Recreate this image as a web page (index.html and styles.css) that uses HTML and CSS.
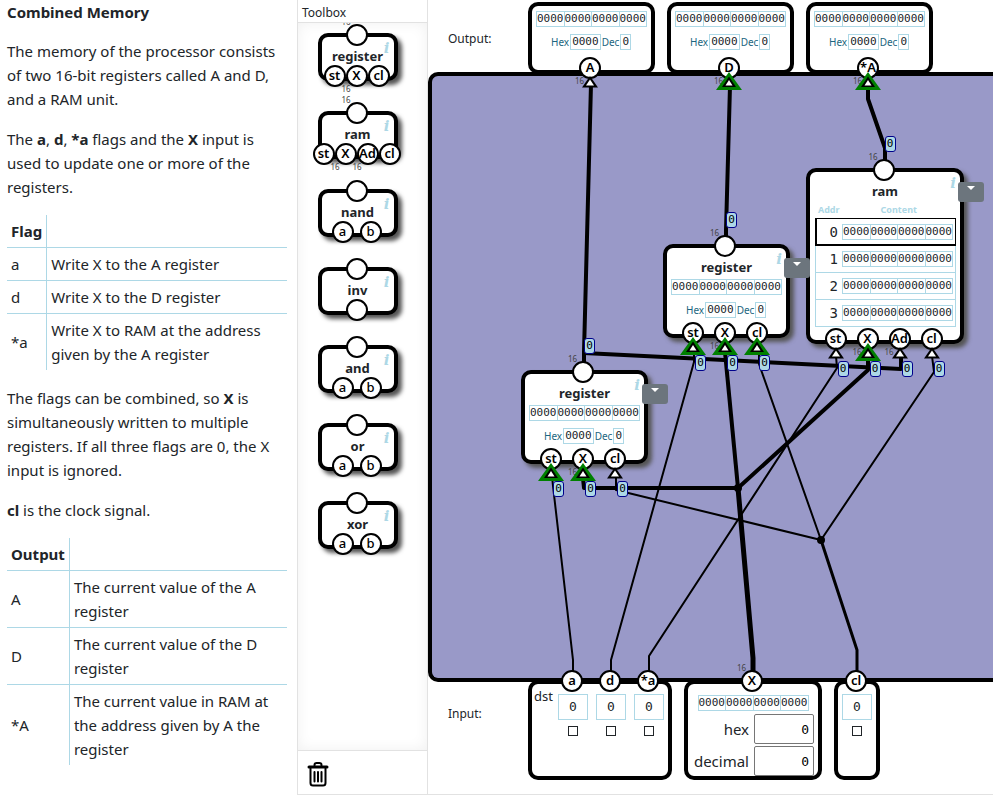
FILE: index.html
```html
<!DOCTYPE html>
<html lang="en">
<head>
<meta charset="utf-8">
<title>Combined Memory</title>
<link rel="stylesheet" href="styles.css">
</head>
<body>
<div class="app">
  <article class="guide">
    <h1>Combined Memory</h1>
    <p>The memory of the processor consists of two 16-bit registers called A and D, and a RAM unit.</p>
    <p>The <b>a</b>, <b>d</b>, <b>*a</b> flags and the <b>X</b> input is used to update one or more of the registers.</p>
    <table class="spec">
      <tr><th>Flag</th><th></th></tr>
      <tr><td>a</td><td>Write X to the A register</td></tr>
      <tr><td>d</td><td>Write X to the D register</td></tr>
      <tr><td>*a</td><td>Write X to RAM at the address given by the A register</td></tr>
    </table>
    <p>The flags can be combined, so <b>X</b> is simultaneously written to multiple registers. If all three flags are 0, the X input is ignored.</p>
    <p><b>cl</b> is the clock signal.</p>
    <table class="spec">
      <tr><th>Output</th><th></th></tr>
      <tr><td>A</td><td>The current value of the A register</td></tr>
      <tr><td>D</td><td>The current value of the D register</td></tr>
      <tr><td>*A</td><td>The current value in RAM at the address given by A the register</td></tr>
    </table>
  </article>

  <aside class="toolbox">
    <h2>Toolbox</h2>
    <div class="tools">
      <div class="node tool"><div class="pins top"><span class="pin"><small>16</small></span></div><h3>register</h3><i class="info">i</i><div class="pins bottom"><span class="pin">st</span><span class="pin">X<small>16</small></span><span class="pin">cl</span></div></div>
      <div class="node tool"><div class="pins top"><span class="pin"><small>16</small></span></div><h3>ram</h3><i class="info">i</i><div class="pins bottom"><span class="pin">st</span><span class="pin">X<small>16</small></span><span class="pin">Ad<small>16</small></span><span class="pin">cl</span></div></div>
      <div class="node tool"><div class="pins top"><span class="pin"></span></div><h3>nand</h3><i class="info">i</i><div class="pins bottom pair"><span class="pin">a</span><span class="pin">b</span></div></div>
      <div class="node tool"><div class="pins top"><span class="pin"></span></div><h3>inv</h3><i class="info">i</i><div class="pins bottom"><span class="pin"></span></div></div>
      <div class="node tool"><div class="pins top"><span class="pin"></span></div><h3>and</h3><i class="info">i</i><div class="pins bottom pair"><span class="pin">a</span><span class="pin">b</span></div></div>
      <div class="node tool"><div class="pins top"><span class="pin"></span></div><h3>or</h3><i class="info">i</i><div class="pins bottom pair"><span class="pin">a</span><span class="pin">b</span></div></div>
      <div class="node tool"><div class="pins top"><span class="pin"></span></div><h3>xor</h3><i class="info">i</i><div class="pins bottom pair"><span class="pin">a</span><span class="pin">b</span></div></div>
    </div>
    <div class="bin">
      <svg width="22" height="26" viewBox="0 0 22 26" fill="none" stroke="#000" stroke-linecap="round" stroke-linejoin="round" role="img" aria-label="Trash">
        <path d="M7.500 4.500V4Q7.500 2 9.500 2H12.500Q14.500 2 14.500 4V4.500" stroke-width="2"/>
        <path d="M2 6H20" stroke-width="3"/>
        <path d="M3.500 7.500V22Q3.500 24.500 6 24.500H16Q18.500 24.500 18.500 22V7.500" stroke-width="2"/>
        <path d="M7.500 11V20.500M11 11V20.500M14.500 11V20.500" stroke-width="2"/>
      </svg>
    </div>
  </aside>

  <main class="workspace">
    <svg class="defs" width="0" height="0" aria-hidden="true">
      <symbol id="arrow" viewBox="0 0 28 20"><path d="M14 4L22 15.500H6Z"/><path d="M14 7.500L18 13.500H10Z" fill="#fff"/></symbol>
      <symbol id="arrow-on" viewBox="0 0 28 20"><path d="M14 0L27 18H1Z" fill="#008000"/><path d="M14 4.500L21 15H7Z"/><path d="M14 8L17.500 13.500H10.500Z" fill="#fff"/></symbol>
    </svg>

    <section class="outputs">
      <span class="side-label">Output:</span>
      <div class="port-box">
        <div class="bits"><span>0000</span><span>0000</span><span>0000</span><span>0000</span></div>
        <div class="numbers">Hex<output>0000</output>Dec<output>0</output></div>
        <div class="pins bottom"><span class="pin">A<small>16</small><svg><use href="#arrow"/></svg></span></div>
      </div>
      <div class="port-box">
        <div class="bits"><span>0000</span><span>0000</span><span>0000</span><span>0000</span></div>
        <div class="numbers">Hex<output>0000</output>Dec<output>0</output></div>
        <div class="pins bottom"><span class="pin">D<small>16</small><svg><use href="#arrow-on"/></svg></span></div>
      </div>
      <div class="port-box">
        <div class="bits"><span>0000</span><span>0000</span><span>0000</span><span>0000</span></div>
        <div class="numbers">Hex<output>0000</output>Dec<output>0</output></div>
        <div class="pins bottom"><span class="pin">*A<small>16</small><svg><use href="#arrow-on"/></svg></span></div>
      </div>
    </section>

    <section class="chip">
      <svg class="wires" aria-hidden="true">
        <g transform="translate(-432 -76)" fill="none" stroke="#000" stroke-linejoin="round">
          <g stroke-width="4">
            <path d="M591 84L584 352V364"/>
            <path d="M584 353L901 369V356"/>
            <path d="M730 86L726 230V238"/>
            <path d="M868 86V99L885 148V162"/>
            <path d="M583 478L584 488H738L868 370V356"/>
            <path d="M725 352L738 488"/>
          </g>
          <path d="M738 488L753 658V674" stroke-width="5"/>
          <path d="M821 540L857 650V674" stroke-width="3"/>
          <g stroke-width="2">
            <path d="M552 476L553 486L573 660V674"/>
            <path d="M694 354V362L611 660V674"/>
            <path d="M836 356L837 368L649 656V674"/>
            <path d="M616 478V490L821 540L759 364V352"/>
            <path d="M932 356L934 372L821 540"/>
          </g>
          <g fill="#000" stroke="none"><circle cx="738" cy="488" r="4"/><circle cx="821" cy="540" r="4"/></g>
        </g>
      </svg>

      <div class="node placed reg-a">
        <div class="pins top"><span class="pin"><small>16</small><em>0</em></span></div>
        <h3>register</h3><i class="info">i</i>
        <div class="bits"><span>0000</span><span>0000</span><span>0000</span><span>0000</span></div>
        <div class="numbers">Hex<output>0000</output>Dec<output>0</output></div>
        <button class="menu" aria-label="Register menu"></button>
        <div class="pins bottom"><span class="pin">st<svg><use href="#arrow-on"/></svg><em>0</em></span><span class="pin">X<small>16</small><svg><use href="#arrow-on"/></svg><em>0</em></span><span class="pin">cl<svg><use href="#arrow"/></svg><em>0</em></span></div>
      </div>

      <div class="node placed reg-d">
        <div class="pins top"><span class="pin"><small>16</small><em>0</em></span></div>
        <h3>register</h3><i class="info">i</i>
        <div class="bits"><span>0000</span><span>0000</span><span>0000</span><span>0000</span></div>
        <div class="numbers">Hex<output>0000</output>Dec<output>0</output></div>
        <button class="menu" aria-label="Register menu"></button>
        <div class="pins bottom"><span class="pin">st<svg><use href="#arrow-on"/></svg><em>0</em></span><span class="pin">X<small>16</small><svg><use href="#arrow-on"/></svg><em>0</em></span><span class="pin">cl<svg><use href="#arrow-on"/></svg><em>0</em></span></div>
      </div>

      <div class="node placed ram">
        <div class="pins top"><span class="pin"><small>16</small><em>0</em></span></div>
        <h3>ram</h3><i class="info">i</i>
        <table class="cells">
          <thead><tr><th>Addr</th><th>Content</th></tr></thead>
          <tbody>
            <tr class="current"><td>0</td><td><div class="bits"><span>0000</span><span>0000</span><span>0000</span><span>0000</span></div></td></tr>
            <tr><td>1</td><td><div class="bits"><span>0000</span><span>0000</span><span>0000</span><span>0000</span></div></td></tr>
            <tr><td>2</td><td><div class="bits"><span>0000</span><span>0000</span><span>0000</span><span>0000</span></div></td></tr>
            <tr><td>3</td><td><div class="bits"><span>0000</span><span>0000</span><span>0000</span><span>0000</span></div></td></tr>
          </tbody>
        </table>
        <button class="menu" aria-label="RAM menu"></button>
        <div class="pins bottom"><span class="pin">st<svg><use href="#arrow"/></svg><em>0</em></span><span class="pin">X<small>16</small><svg><use href="#arrow-on"/></svg><em>0</em></span><span class="pin">Ad<small>16</small><svg><use href="#arrow"/></svg><em>0</em></span><span class="pin">cl<svg><use href="#arrow"/></svg><em>0</em></span></div>
      </div>
    </section>

    <section class="inputs">
      <span class="side-label">Input:</span>
      <div class="port-box flags">
        <span class="group">dst</span>
        <div class="flag"><label class="pin" for="in-a">a</label><output>0</output><input type="checkbox" id="in-a"></div>
        <div class="flag"><label class="pin" for="in-d">d</label><output>0</output><input type="checkbox" id="in-d"></div>
        <div class="flag"><label class="pin" for="in-ma">*a</label><output>0</output><input type="checkbox" id="in-ma"></div>
      </div>
      <div class="port-box word">
        <div class="pins top"><span class="pin">X<small>16</small></span></div>
        <div class="bits"><span>0000</span><span>0000</span><span>0000</span><span>0000</span></div>
        <div class="fields">
          <label for="in-hex">hex</label><input id="in-hex" type="text" value="0">
          <label for="in-dec">decimal</label><input id="in-dec" type="text" value="0">
        </div>
      </div>
      <div class="port-box flags">
        <div class="flag"><label class="pin" for="in-cl">cl</label><output>0</output><input type="checkbox" id="in-cl"></div>
      </div>
    </section>
  </main>
</div>
</body>
</html>
```
FILE: styles.css
```css
* { box-sizing: border-box; }

body {
  margin: 0;
  background: #fff;
  color: #212529;
  font: 15px/24px "Noto Sans", "Open Sans", sans-serif;
}

.app {
  display: grid;
  grid-template-columns: 297px 131px minmax(0, 1fr);
  height: calc(100vh - 5px);
  overflow: hidden;
}

/* Guide */
.guide { padding: 0 10px 0 7px; }
.guide h1 { margin: 0 0 15px; font-size: 15px; line-height: 24px; }
.guide p { margin: 0 0 16px; }
.spec { width: 100%; margin-bottom: 16px; border-collapse: collapse; }
.spec th, .spec td { padding: 4px; text-align: left; }
.spec tr + tr { border-top: 1px solid #add8e6; }
.spec tr > :first-child { border-right: 1px solid #add8e6; }

/* Toolbox */
.toolbox {
  display: flex;
  flex-direction: column;
  border: 1px solid #e2e2e2;
  border-width: 0 1px 1px;
}
.toolbox h2 {
  margin: 0;
  padding: 4px 4px 0;
  font-size: 12px;
  font-weight: 400;
  line-height: 18px;
}
.tools {
  flex: 1;
  display: flex;
  flex-direction: column;
  align-items: center;
  gap: 30px;
  padding: 10px 10px 0 0;
  border: 1px solid #e2e2e2;
  border-width: 1px 0;
  box-shadow: inset 0 0 14px #f0f0f0;
  overflow: hidden;
}
.bin { padding: 10px 9px; height: 43px; }
.bin svg { display: block; }

/* Components */
.node, .port-box {
  position: relative;
  border: 4px solid #000;
  border-radius: 10px;
  background: #fff;
}
.node { padding: 9px 0 11px; box-shadow: 4px 4px 4px #555; }
.node h3 { margin: 0; font-size: 13px; line-height: 20px; text-align: center; }
.tool { flex: none; width: 80px; }
.placed { position: absolute; width: 127px; padding: 9px 4px 16px; }
.info {
  position: absolute;
  top: 1px;
  right: 4px;
  color: #add8e6;
  font: italic bold 15px/20px "DejaVu Serif", serif;
}

.pins {
  position: absolute;
  left: 0;
  right: 3px;
  display: flex;
  justify-content: center;
  gap: 10px;
}
.pins.top { top: -13px; }
.pins.bottom { bottom: -10px; }
.tool .pins { gap: 0; right: 2px; }
.tool .pins.pair { gap: 6px; }
.pair .pin { font-weight: 500; }
.pin {
  position: relative;
  flex: none;
  z-index: 1;
  width: 22px;
  height: 22px;
  border: 2px solid #000;
  border-radius: 50%;
  background: #fff;
  color: #000;
  font-size: 13px;
  font-weight: 600;
  line-height: 17px;
  display: flex;
  justify-content: center;
}
.pin small {
  position: absolute;
  left: -6px;
  color: #444;
  font-size: 8px;
  font-weight: 400;
  line-height: 10px;
}
.top small { top: -9px; }
.bottom small { top: 17px; }
.pin svg { position: absolute; top: 13px; left: -5px; width: 28px; height: 20px; }
.pin em {
  position: absolute;
  top: 31px;
  left: 11px;
  width: 11px;
  height: 16px;
  border: 1px solid #00008b;
  border-radius: 3px;
  background: #add8e6;
  font: 11px/14px "DejaVu Sans Mono", monospace;
  text-align: center;
}
.top em { top: -25px; left: 10px; }

.bits {
  display: flex;
  width: 111px;
  margin: 0 auto;
  border: 1px solid #add8e6;
  color: #212529;
  font: 11px/14px "DejaVu Sans Mono", monospace;
}
.bits span { flex: 1; display: flex; justify-content: center; }
.bits span + span { border-left: 1px solid #add8e6; }
.node > .bits { margin-top: 2px; }
.numbers {
  display: flex;
  justify-content: center;
  gap: 1px;
  margin-top: 7px;
  padding-right: 1px;
  color: #1c6680;
  font-size: 10px;
  line-height: 16px;
}
.numbers output {
  padding: 0 1px;
  border: 1px solid #add8e6;
  color: #212529;
  font: 11px/14px "DejaVu Sans Mono", monospace;
}

.menu {
  position: absolute;
  top: 10px;
  right: -24px;
  width: 26px;
  height: 20px;
  padding: 0;
  border: 0;
  border-radius: 3px;
  background: #6c757d;
}
.menu::before {
  content: "";
  display: block;
  width: 0;
  margin: -6px auto 0;
  border: 4px solid transparent;
  border-top-color: #fff;
  border-bottom: 0;
}

/* Memory cells */
.cells { margin: 1px 0 0 1px; border-collapse: collapse; width: 141px; }
.cells th { padding: 0; height: 16px; color: #add8e6; font-size: 9px; line-height: 12px; }
.cells td { padding: 0 2px 0 0; height: 27px; border: 1px solid #add8e6; border-width: 1px 0; }
.cells td:first-child { width: 27px; padding: 0 4px 0 0; border-left-width: 1px; font: 14px/24px "DejaVu Sans Mono", monospace; text-align: right; }
.cells td:last-child { border-right-width: 1px; }
.cells .current { outline: 1px solid #000; outline-offset: -1px; box-shadow: -1px 0 #000; }
.cells .current td { border-color: #000; }

/* Workspace */
.workspace {
  display: flex;
  flex-direction: column;
  border-bottom: 1px solid #e2e2e2;
  overflow: hidden;
}
.defs { position: absolute; }
.outputs, .inputs { position: relative; z-index: 2; display: flex; gap: 12px; }
.outputs { height: 72px; padding-top: 2px; }
.inputs { height: 114px; margin-top: -2px; }
.side-label { width: 88px; padding-left: 20px; font-size: 12px; }
.outputs .side-label { padding-top: 25px; }
.inputs .side-label { padding-top: 22px; }
.outputs .port-box { flex: none; width: 127px; height: 72px; padding-top: 5px; }
.outputs .pins { bottom: -9px; }
.inputs .port-box { flex: none; height: 100px; }
.inputs .pins.top { top: -14px; }
.chip {
  position: relative;
  flex: 1;
  border: 4px solid #000;
  border-right: 0;
  border-radius: 10px 0 0 10px;
  background: #9999c8;
}
.wires { position: absolute; top: 0; left: 0; width: 100%; height: 100%; overflow: visible; }

/* Placement on the free canvas */
.reg-a { left: 89px; top: 294px; }
.reg-d { left: 231px; top: 168px; z-index: 1; }
.ram { left: 374px; top: 92px; width: 158px; padding-bottom: 13px; }

/* Inputs */
.flags { display: flex; gap: 8px; padding: 10px 4px 0; }
.flags .group { width: 18px; margin: -10px -2px 0 -2px; font-size: 13px; }
.flag { position: relative; display: flex; flex-direction: column; align-items: center; gap: 6px; }
.flag .pin { position: absolute; top: -24px; left: 3px; }
.flag output {
  width: 30px;
  height: 26px;
  border: 1px solid #add8e6;
  font: 13px/24px "DejaVu Sans Mono", monospace;
  text-align: center;
}
.flag input {
  appearance: none;
  width: 10px;
  height: 10px;
  margin: 0;
  border: 1px solid #212529;
}
.word { width: 138px; padding: 11px 4px 0; }
.word .pins { right: 2px; }
.fields {
  display: grid;
  grid-template-columns: 1fr 60px;
  gap: 2px 5px;
  margin-top: 3px;
  line-height: 30px;
  text-align: right;
}
.fields input {
  width: 60px;
  height: 30px;
  padding: 0 4px;
  border: 1px solid #767676;
  border-radius: 2px;
  font: 13px "DejaVu Sans Mono", monospace;
  text-align: right;
}
```
